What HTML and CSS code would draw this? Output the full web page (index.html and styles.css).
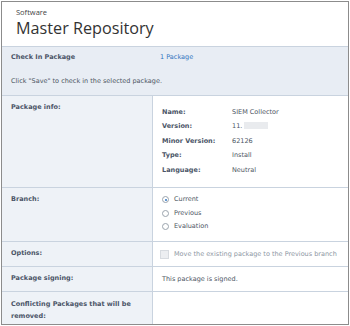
FILE: index.html
```html
<!DOCTYPE html>
<html>
<head>
<meta charset="utf-8">
<link rel="stylesheet" href="styles.css">
</head>
<body>
<div class="page">
  <div class="header">
    <div class="crumb">Software</div>
    <div class="title">Master Repository</div>
  </div>
  <div class="checkin">
    <div class="checkin-row">
      <div class="label">Check In Package</div>
      <div class="link">1 Package</div>
    </div>
    <div class="hint">Click "Save" to check in the selected package.</div>
  </div>
  <div class="row row-info">
    <div class="cell-left label">Package info:</div>
    <div class="cell-right">
      <div class="info">
        <div class="ilabel">Name:</div><div class="ival">SIEM Collector</div>
        <div class="ilabel">Version:</div><div class="ival">11.<span class="blur"></span></div>
        <div class="ilabel">Minor Version:</div><div class="ival">62126</div>
        <div class="ilabel">Type:</div><div class="ival">Install</div>
        <div class="ilabel">Language:</div><div class="ival">Neutral</div>
      </div>
    </div>
  </div>
  <div class="row row-branch">
    <div class="cell-left label">Branch:</div>
    <div class="cell-right radios">
      <div class="radio"><span class="dot on"></span>Current</div>
      <div class="radio"><span class="dot"></span>Previous</div>
      <div class="radio"><span class="dot"></span>Evaluation</div>
    </div>
  </div>
  <div class="row row-opt">
    <div class="cell-left label">Options:</div>
    <div class="cell-right opt"><span class="cbox"></span>Move the existing package to the Previous branch</div>
  </div>
  <div class="row row-sign">
    <div class="cell-left label">Package signing:</div>
    <div class="cell-right val">This package is signed.</div>
  </div>
  <div class="row row-conf">
    <div class="cell-left label">Conflicting Packages that will be removed:</div>
    <div class="cell-right"></div>
  </div>
</div>
</body>
</html>
```
FILE: styles.css
```css
html, body { margin: 0; padding: 0; background: #fff; }
body { font-family: "DejaVu Sans", Verdana, sans-serif; }
.page {
  margin: 1px 0 0 1px;
  width: 346px;
  height: 322px;
  border: 1px solid #8c8c8c;
  display: flex;
  flex-direction: column;
  overflow: hidden;
}
.header { height: 45px; padding: 5px 0 0 14px; box-sizing: border-box; border-bottom: 1px solid #c9d3df; }
.crumb { font-family: "Open Sans", sans-serif; font-size: 7.5px; color: #444; line-height: 10px; }
.title { font-family: "Open Sans", sans-serif; font-size: 16.2px; color: #333; line-height: 22px; margin-top: 0; }
.checkin { background: #e8edf4; height: 49px; box-sizing: border-box; padding: 4px 0 0 9px; border-bottom: 1px solid #c9d3df; }
.checkin-row { display: flex; }
.checkin-row .label { width: 149px; }
.link { font-size: 6.5px; color: #2f74c0; line-height: 12px; }
.hint { font-size: 6.5px; color: #4c5563; margin-top: 13px; line-height: 10px; }
.label { font-size: 6.5px; font-weight: bold; color: #4b5567; line-height: 12px; }
.row { display: flex; border-bottom: 1px solid #c9d3df; flex-shrink: 0; }
.cell-left { width: 141px; background: #eef2f7; padding: 5px 0 0 9px; border-right: 1px solid #c9d3df; box-sizing: content-box; }
.cell-right { flex: 1; padding-left: 9px; }
.row-info { height: 91px; }
.row-info .cell-right { padding-top: 10px; }
.info { display: grid; grid-template-columns: 70px 1fr; row-gap: 2.4px; }
.ilabel { font-size: 6.5px; font-weight: bold; color: #4b5567; line-height: 12px; }
.ival { font-size: 6.5px; color: #4c5563; line-height: 12px; }
.blur { display: inline-block; width: 24px; height: 7px; background: #e9ebee; vertical-align: -1px; margin-left: 2px; }
.row-branch { height: 53px; }
.radios { padding-top: 6px; display: flex; flex-direction: column; gap: 2px; }
.radio { font-size: 6.5px; color: #4c5563; line-height: 11.5px; display: flex; align-items: center; }
.dot { width: 7px; height: 7px; border: 1px solid #9aa3ad; border-radius: 50%; margin-right: 5px; box-sizing: border-box; position: relative; background: #fff; }
.dot.on::after { content: ""; position: absolute; left: 1.5px; top: 1.5px; width: 2px; height: 2px; border-radius: 50%; background: #2f74c0; }
.row-opt { height: 24px; }
.opt { font-size: 6.5px; color: #8d96a3; display: flex; align-items: center; padding-left: 7px; }
.cbox { width: 7px; height: 7px; border: 1px solid #d7dbe0; background: #eceef1; margin-right: 5px; }
.row-sign { height: 24px; }
.val { font-size: 6.5px; color: #4c5563; line-height: 12px; padding-top: 6px; }
.row-conf { flex: 1; border-bottom: none; }
.row-conf .cell-left { padding-top: 6px; padding-right: 10px; width: 131px; }
```
